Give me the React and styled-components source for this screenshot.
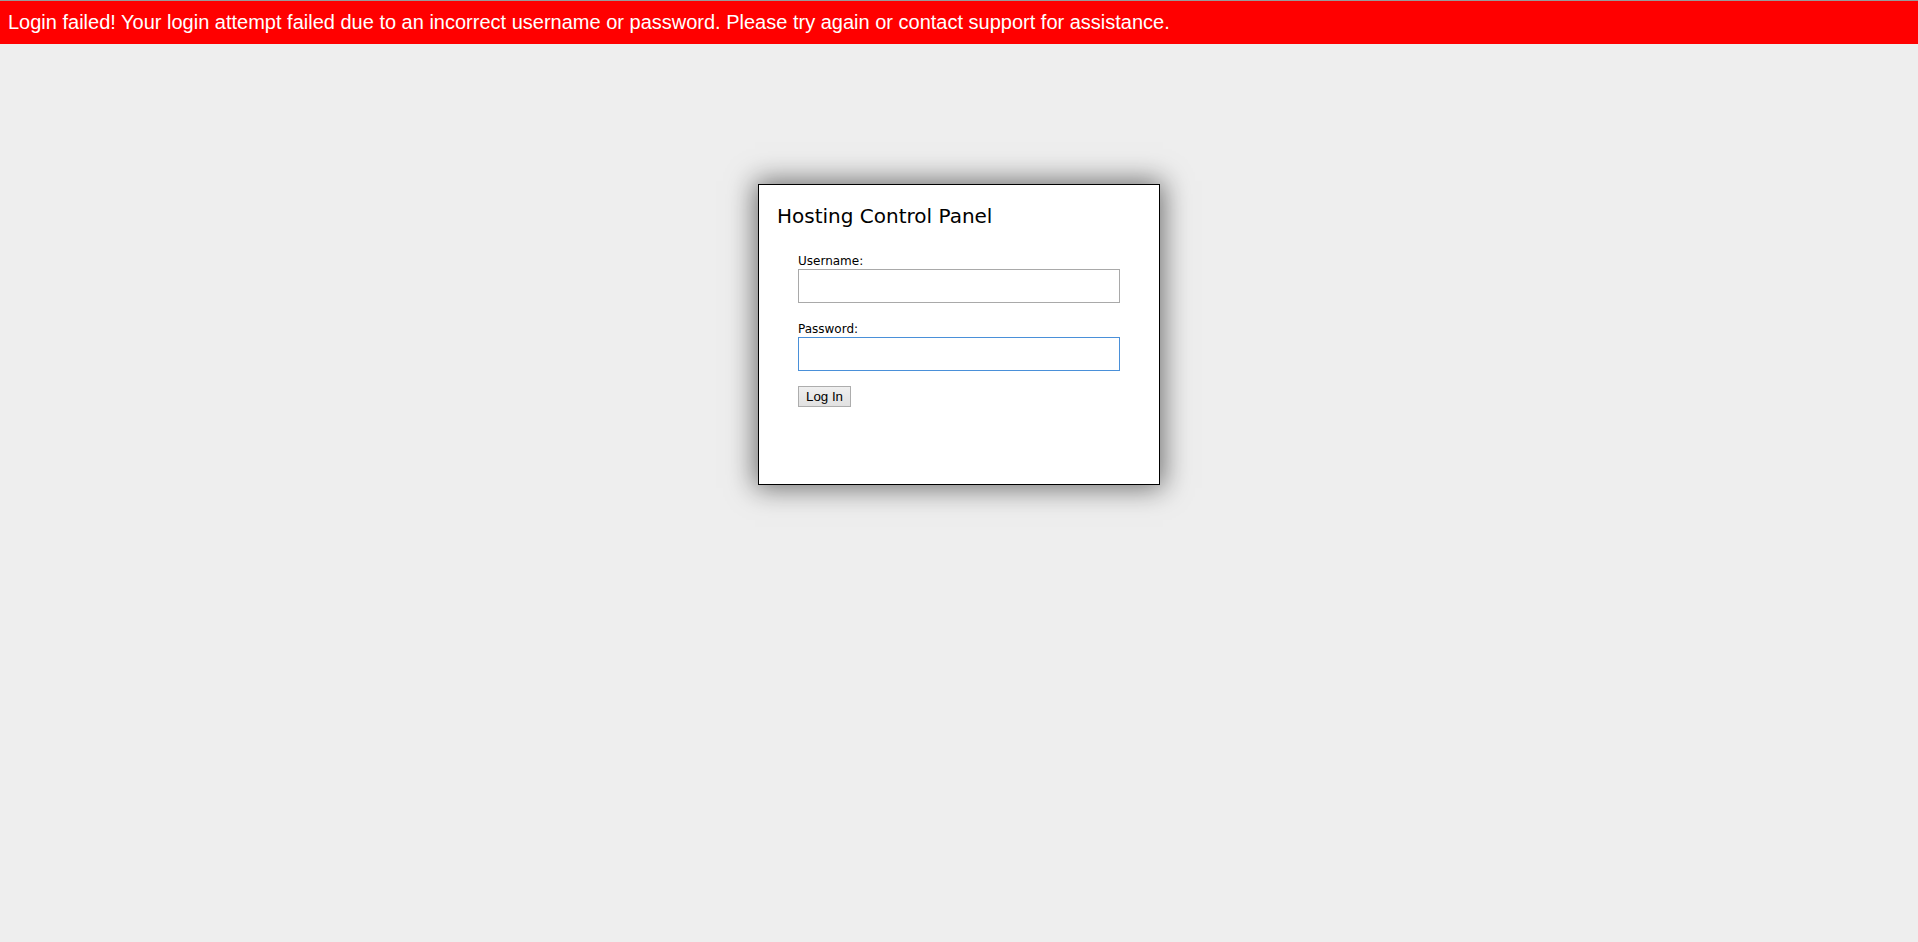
import React from "react";
import styled, { createGlobalStyle } from "styled-components";

const GlobalStyle = createGlobalStyle`
  html, body {
    margin: 0;
    padding: 0;
    background: #eeeeee;
  }
  body {
    font-family: "DejaVu Sans", Verdana, sans-serif;
    min-height: 942px;
  }
`;

const ErrorBanner = styled.div`
  border-top: 1px solid #9a9a9a;
  background: #ff0000;
  color: #ffffff;
  height: 43px;
  line-height: 43px;
  padding: 0 8px;
  font-family: "Liberation Sans", Arial, sans-serif;
  font-size: 20px;
  white-space: nowrap;
`;

const Card = styled.div`
  box-sizing: border-box;
  width: 402px;
  height: 301px;
  margin: 140px auto 0;
  background: #ffffff;
  border: 1px solid #000000;
  box-shadow: 0 0 26px 3px rgba(0, 0, 0, 0.55);
  padding: 19px 0 0 18px;
`;

const CardInner = styled.div`
  display: flex;
  flex-direction: column;
`;

const Title = styled.h1`
  margin: 0;
  font-family: "DejaVu Sans", Verdana, sans-serif;
  font-weight: normal;
  font-size: 20px;
  line-height: 24px;
  color: #000000;
`;

const Form = styled.form`
  display: flex;
  flex-direction: column;
  padding: 25px 0 0 21px;
  margin: 0;
`;

const Field = styled.div`
  display: flex;
  flex-direction: column;
  margin-bottom: ${(p) => p.$gap}px;
`;

const Label = styled.label`
  display: block;
  font-size: 12px;
  line-height: 16px;
  color: #000000;
`;

const Input = styled.input`
  box-sizing: border-box;
  width: 322px;
  height: 34px;
  margin: 0;
  padding: 2px 6px;
  background: #ffffff;
  border: 1px solid ${(p) => (p.$active ? "#4a90d9" : "#a9a9a9")};
  outline: none;
  font-family: "DejaVu Sans", Verdana, sans-serif;
  font-size: 13px;
`;

const Button = styled.button`
  align-self: flex-start;
  box-sizing: border-box;
  width: 53px;
  height: 21px;
  margin: 0;
  padding: 0;
  background: linear-gradient(#efefef, #e1e1e1);
  border: 1px solid #adadad;
  border-radius: 0;
  font-family: "Liberation Sans", Arial, sans-serif;
  font-size: 13.33px;
  color: #000000;
  cursor: pointer;
`;

export default function App() {
  return (
    <>
      <GlobalStyle />
      <ErrorBanner>
        Login failed! Your login attempt failed due to an incorrect username or
        password. Please try again or contact support for assistance.
      </ErrorBanner>
      <Card>
        <CardInner>
          <Title>Hosting Control Panel</Title>
          <Form onSubmit={(e) => e.preventDefault()}>
            <Field $gap={18}>
              <Label htmlFor="username">Username:</Label>
              <Input id="username" name="username" type="text" />
            </Field>
            <Field $gap={15}>
              <Label htmlFor="password">Password:</Label>
              <Input id="password" name="password" type="password" $active />
            </Field>
            <Button type="submit">Log In</Button>
          </Form>
        </CardInner>
      </Card>
    </>
  );
}
